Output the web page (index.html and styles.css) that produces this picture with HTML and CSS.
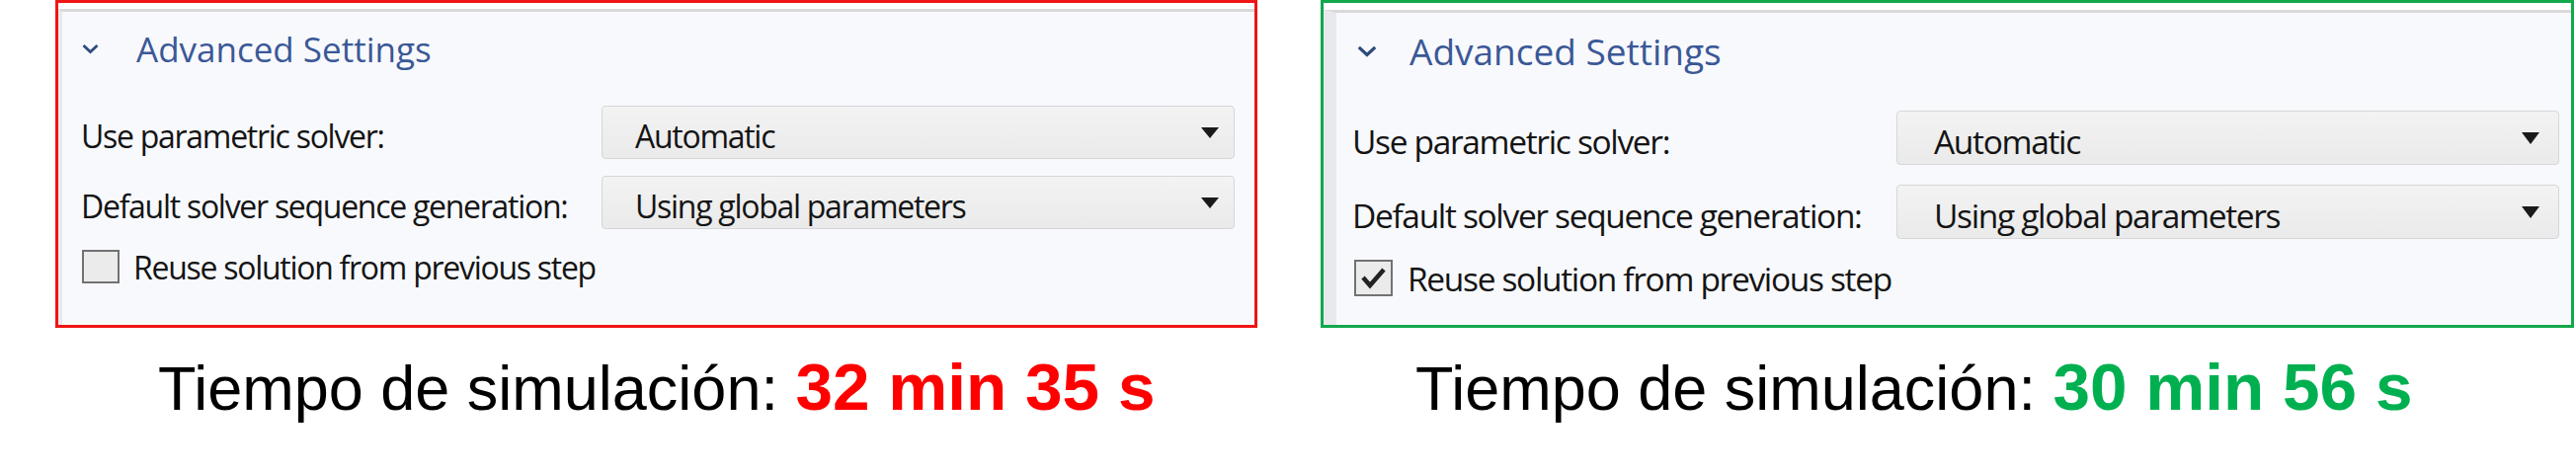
FILE: index.html
```html
<!DOCTYPE html>
<html lang="es">
<head>
    <meta charset="utf-8">
    <title>Comparación de tiempos de simulación</title>
    <link rel="stylesheet" href="styles.css">
</head>
<body>

<div class="board">
    <section class="case case-slow">
        <div class="panel">
            <div class="panel-body">
                <div class="panel-head">
                    <svg class="chevron" viewBox="0 0 17 10"><polyline points="1.5,1.5 8.5,8 15.5,1.5"/></svg>
                    <h2>Advanced Settings</h2>
                </div>
                <div class="fields">
                    <label>Use parametric solver:</label>
                    <div class="select"><span>Automatic</span><i class="caret"></i></div>
                    <label>Default solver sequence generation:</label>
                    <div class="select"><span>Using global parameters</span><i class="caret"></i></div>
                </div>
                <div class="check">
                    <span class="box"></span>
                    <span>Reuse solution from previous step</span>
                </div>
            </div>
        </div>
        <p class="caption">Tiempo de simulación: <strong>32 min 35 s</strong></p>
    </section>

    <section class="case case-fast">
        <div class="panel">
            <div class="panel-body">
                <div class="panel-head">
                    <svg class="chevron" viewBox="0 0 17 10"><polyline points="1.5,1.5 8.5,8 15.5,1.5"/></svg>
                    <h2>Advanced Settings</h2>
                </div>
                <div class="fields">
                    <label>Use parametric solver:</label>
                    <div class="select"><span>Automatic</span><i class="caret"></i></div>
                    <label>Default solver sequence generation:</label>
                    <div class="select"><span>Using global parameters</span><i class="caret"></i></div>
                </div>
                <div class="check">
                    <span class="box">
                        <svg viewBox="0 0 35 33"><polyline points="7,16 14,24 28,8"/></svg>
                    </span>
                    <span>Reuse solution from previous step</span>
                </div>
            </div>
        </div>
        <p class="caption">Tiempo de simulación: <strong>30 min 56 s</strong></p>
    </section>
</div>

</body>
</html>
```

FILE: styles.css
```css
body {
    margin: 0;
    background-color: white;
    font-family: "Open Sans", "Noto Sans", sans-serif;
    color: #141414;
}
.board {
    display: flex;
    gap: 64px;
    padding-left: 56px;
}
.case {
    display: flex;
    flex-direction: column;
}
.panel {
    display: flex;
    flex-direction: column;
    height: 332px;
    box-sizing: border-box;
    border: 3px solid;
    background-color: white;
}
.panel-body {
    flex: 1;
    background-color: #f8f9fc;
    border-top: 3px solid #d9d9db;
    border-left: 4px solid #e8e9ec;
}
.panel-head {
    display: flex;
    align-items: center;
}
.panel-head h2 {
    margin: 0;
    font-weight: normal;
    color: #3a5897;
}
.chevron {
    fill: none;
    stroke: #2f4b7c;
    stroke-width: 2.8;
}
.fields {
    display: grid;
    align-items: center;
}
.fields label,
.select,
.check {
    letter-spacing: -0.04em;
}
.fields label,
.select span {
    padding-top: 6px;
}
.select {
    display: flex;
    align-items: center;
    justify-content: space-between;
    height: 100%;
    box-sizing: border-box;
    border: 1px solid #d6d6d8;
    border-radius: 4px;
    background: linear-gradient(#f3f3f3, #eaeaea);
}
.caret {
    width: 0;
    height: 0;
    border-left: 9px solid transparent;
    border-right: 9px solid transparent;
    border-top: 11px solid #1a1a1a;
}
.check {
    display: flex;
    align-items: center;
}
.box {
    display: flex;
    box-sizing: border-box;
    border: 2px solid #727272;
    background-color: #ebebeb;
}
.box svg {
    width: 100%;
    height: 100%;
    fill: none;
    stroke: #222;
    stroke-width: 4.5;
}
.caption {
    margin: 25px 0 0;
    font-family: "Liberation Sans", Arial, sans-serif;
    font-size: 63px;
    line-height: 70px;
    color: black;
}
.caption strong {
    font-size: 67.5px;
}

/* left: without reuse */
.case-slow .panel {
    width: 1217px;
    padding-top: 6px;
    border-color: #f01414;
}
.case-slow .panel-body {
    padding: 0 20px 0 19px;
}
.case-slow .panel-head {
    height: 74px;
    gap: 38px;
}
.case-slow .chevron {
    width: 17px;
    height: 11px;
    margin-left: 1px;
}
.case-slow h2 {
    font-size: 35px;
}
.case-slow .fields {
    grid-template-columns: 527px 641px;
    grid-auto-rows: 54px;
    row-gap: 17px;
    margin-top: 21px;
    font-size: 32px;
}
.case-slow .select {
    padding: 0 15px 0 33px;
}
.case-slow .check {
    margin-top: 21px;
    height: 34px;
    gap: 14px;
    font-size: 32px;
}
.case-slow .box {
    width: 38px;
    height: 34px;
    margin-left: 1px;
}
.case-slow .caption {
    margin-left: 104px;
}
.case-slow strong {
    color: #ff0000;
}

/* right: reuse previous solution */
.case-fast .panel {
    width: 1269px;
    padding-top: 7px;
    border-color: #12a84c;
}
.case-fast .panel-body {
    padding: 0 12px 0 16px;
    border-left-width: 13px;
}
.case-fast .panel-head {
    height: 77px;
    gap: 33px;
}
.case-fast .chevron {
    width: 20px;
    height: 12px;
    margin-left: 5px;
}
.case-fast h2 {
    font-size: 37px;
}
.case-fast .fields {
    grid-template-columns: 551px 671px;
    grid-auto-rows: 55px;
    row-gap: 20px;
    margin-top: 22px;
    font-size: 33.5px;
}
.case-fast .select {
    padding: 0 19px 0 37px;
}
.case-fast .caret {
    border-top-width: 12px;
}
.case-fast .check {
    margin-top: 21px;
    height: 37px;
    gap: 15px;
    font-size: 33.5px;
}
.case-fast .box {
    width: 39px;
    height: 37px;
    margin-left: 2px;
}
.case-fast .caption {
    margin-left: 96px;
}
.case-fast strong {
    color: #00b050;
}
```
